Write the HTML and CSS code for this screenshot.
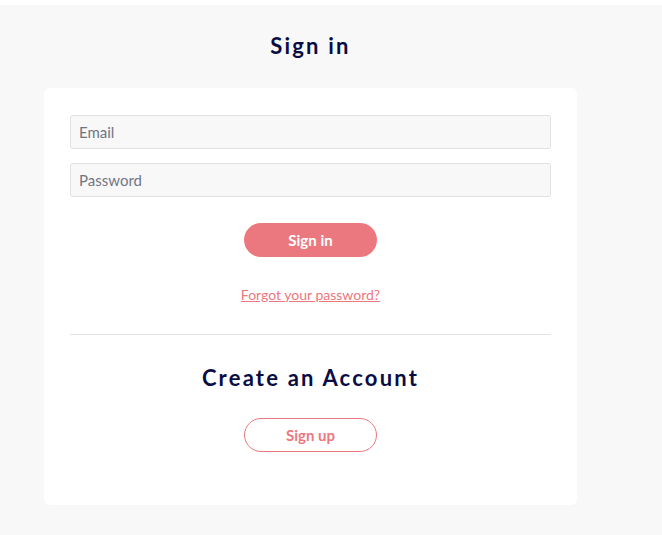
FILE: index.html
```html
<!DOCTYPE html>
<html lang="en">
<head>
  <meta charset="UTF-8">
  <meta name="viewport" content="width=device-width, initial-scale=1.0">
  <title>Sign in</title>
  <link rel="stylesheet" href="styles.css">
</head>
<body>
  <main class="page">
    <div class="auth">
      <h1 class="title">Sign in</h1>

      <div class="card">
        <form class="login-form" onsubmit="return false">
          <input type="email" class="field" placeholder="Email">
          <input type="password" class="field" placeholder="Password">
          <button type="submit" class="btn btn-primary">Sign in</button>
          <a href="#" class="forgot">Forgot your password?</a>
        </form>

        <hr class="divider">

        <div class="register">
          <h2 class="title">Create an Account</h2>
          <button type="button" class="btn btn-outline">Sign up</button>
        </div>
      </div>
    </div>
  </main>
</body>
</html>
```

FILE: styles.css
```css
* {
  margin: 0; padding: 0; box-sizing: border-box;
  font-family: 'Lato', 'Open Sans', sans-serif;
}
body {
  background: #fff;
  color: #333;
}
.page {
  margin-top: 5px;
  min-height: 530px;
  background: #f8f8f8;
  padding: 28px 0 30px 44px;
}
.auth {
  width: 533px;
}
.title {
  text-align: center;
  font-size: 22px;
  line-height: 26px;
  font-weight: 700;
  letter-spacing: 2.2px;
  color: #0a0d45;
}
.card {
  margin-top: 29px;
  background: #fff;
  border-radius: 6px;
  padding: 27px 26px 53px;
}
.login-form {
  display: flex;
  flex-direction: column;
  align-items: center;
}
.field {
  width: 100%;
  height: 34px;
  padding: 0 8px;
  border: 1px solid #e6dfe1;
  border-radius: 3px;
  background: #f8f8f8;
  font-size: 15px;
  color: #333;
}
.field + .field {
  margin-top: 14px;
}
.field::placeholder {
  color: #707585;
}
.btn {
  width: 133px;
  height: 34px;
  border-radius: 17px;
  font-size: 15px;
  font-weight: 700;
  cursor: pointer;
}
.btn-primary {
  margin-top: 26px;
  border: none;
  background: #ec787f;
  color: #fff;
}
.btn-outline {
  margin-top: 27px;
  border: 1px solid #ec787f;
  background: #fff;
  color: #ec787f;
}
.forgot {
  margin-top: 28px;
  font-size: 14px;
  line-height: 20px;
  color: #ec787f;
}
.divider {
  margin-top: 29px;
  border: none;
  border-top: 1px solid #e6e1e3;
}
.register {
  margin-top: 30px;
  display: flex;
  flex-direction: column;
  align-items: center;
}
```
